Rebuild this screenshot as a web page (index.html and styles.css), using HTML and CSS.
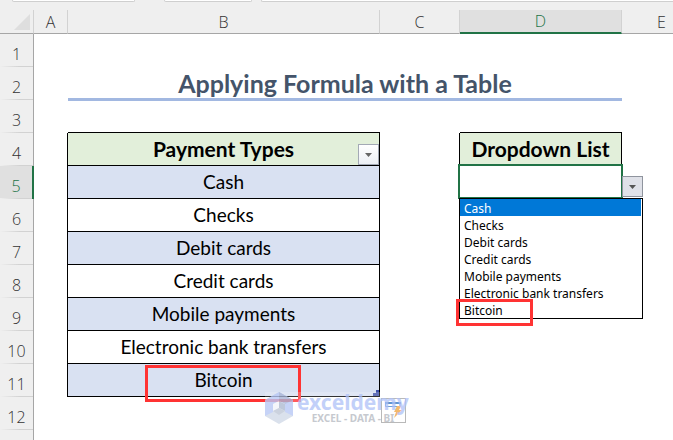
FILE: index.html
```html
<!DOCTYPE html>
<html lang="en">
<head>
    <meta charset="UTF-8">
    <meta name="viewport" content="width=device-width, initial-scale=1.0">
    <title>Applying Formula with a Table</title>
    <link rel="stylesheet" href="styles.css">
</head>
<body>
    <div class="window">
        <!-- Bottom edge of the name box and formula bar -->
        <div class="ribbon">
            <span class="box name-box"></span>
            <span class="box fx-box"></span>
            <span class="box formula-box"></span>
        </div>

        <table class="sheet">
            <colgroup>
                <col class="col-num"><col class="col-a"><col class="col-b"><col class="col-c"><col class="col-d"><col class="col-e">
            </colgroup>
            <thead>
                <tr>
                    <th class="corner"><svg width="16" height="16" viewBox="0 0 16 16"><path d="M16 0V16H0Z" fill="#dedede"/></svg></th>
                    <th>A</th>
                    <th>B</th>
                    <th>C</th>
                    <th class="active">D</th>
                    <th>E</th>
                </tr>
            </thead>
            <tbody>
                <tr><th>1</th><td></td><td></td><td></td><td></td><td></td></tr>
                <tr><th>2</th><td></td><td class="title" colspan="3">Applying Formula with a Table</td><td></td></tr>
                <tr><th>3</th><td></td><td class="line-bottom"></td><td></td><td class="line-bottom"></td><td></td></tr>
                <tr>
                    <th>4</th>
                    <td class="line-right"></td>
                    <td class="cell head">Payment Types
                        <button class="arrow filter" type="button" aria-label="Filter"><svg width="7" height="4" viewBox="0 0 7 4"><path d="M0 0H7L3.5 4Z" fill="#666"/></svg></button>
                    </td>
                    <td class="line-right"></td>
                    <td class="cell head">Dropdown List</td>
                    <td></td>
                </tr>
                <tr>
                    <th class="active">5</th>
                    <td class="line-right"></td>
                    <td class="cell band">Cash</td>
                    <td class="line-right"></td>
                    <td class="cell selected">
                        <span class="selection"></span>
                        <button class="arrow open" type="button" aria-label="Open list"><svg width="7" height="4" viewBox="0 0 7 4"><path d="M0 0H7L3.5 4Z" fill="#555"/></svg></button>
                        <select class="options" size="7" aria-label="Dropdown List">
                            <option selected>Cash</option>
                            <option>Checks</option>
                            <option>Debit cards</option>
                            <option>Credit cards</option>
                            <option>Mobile payments</option>
                            <option>Electronic bank transfers</option>
                            <option>Bitcoin</option>
                        </select>
                        <span class="mark mark-option"></span>
                    </td>
                    <td></td>
                </tr>
                <tr><th>6</th><td class="line-right"></td><td class="cell">Checks</td><td></td><td></td><td></td></tr>
                <tr><th>7</th><td class="line-right"></td><td class="cell band">Debit cards</td><td></td><td></td><td></td></tr>
                <tr><th>8</th><td class="line-right"></td><td class="cell">Credit cards</td><td></td><td></td><td></td></tr>
                <tr><th>9</th><td class="line-right"></td><td class="cell band">Mobile payments</td><td></td><td></td><td></td></tr>
                <tr><th>10</th><td class="line-right"></td><td class="cell">Electronic bank transfers</td><td></td><td></td><td></td></tr>
                <tr>
                    <th>11</th>
                    <td class="line-right"></td>
                    <td class="cell band">Bitcoin
                        <svg class="resize" width="6" height="6" viewBox="0 0 6 6"><path d="M3 0H6V6H0V3H3Z" fill="#3f51a8"/></svg>
                        <span class="mark mark-cell"></span>
                        <button class="paste" type="button" aria-label="AutoCorrect options">
                            <svg width="23" height="23" viewBox="0 0 23 23">
                                <path d="M18 4V7.5H3.5V4" fill="none" stroke="#4c86cc"/>
                                <path d="M3 4H19" stroke="#3878c4" stroke-width="2"/>
                                <path d="M15 7H19L17 11H20L12 19L14 13H12Z" fill="#f0a848"/>
                            </svg>
                        </button>
                        <div class="watermark">
                            <svg width="28" height="32" viewBox="0 0 28 32">
                                <path d="M14 0L28 8V24L14 32L0 24V8Z" fill="#d2dae8"/>
                                <path d="M14 0L28 8V24L20 20V12L14 9L8 12V20L0 24V8Z" fill="#b9c9f6"/>
                                <path d="M14 0L28 8L20 12L14 9Z" fill="#a9b5d6"/>
                                <path d="M14 9L20 12V19L14 16L8 19V12Z" fill="#f2f5fb"/>
                                <path d="M14 9L20 12V19L14 16Z" fill="#aebbd2"/>
                                <path d="M8 19L14 16L20 19L14 23Z" fill="#bfc8d6"/>
                            </svg>
                            <div class="brand">
                                <span class="brand-name">exceldemy</span>
                                <span class="brand-tag">EXCEL - DATA - BI</span>
                            </div>
                        </div>
                    </td>
                    <td></td><td></td><td></td>
                </tr>
                <tr><th>12</th><td></td><td></td><td></td><td></td><td></td></tr>
                <tr><th></th><td></td><td></td><td></td><td></td><td></td></tr>
            </tbody>
        </table>
    </div>
</body>
</html>
```

FILE: styles.css
```css
* {
    box-sizing: border-box;
}
body {
    margin: 0;
    background-color: #fff;
    font-family: Lato, Carlito, sans-serif;
}
.window {
    height: 100vh;
    overflow: hidden;
}
.ribbon {
    display: flex;
    height: 10px;
    padding-left: 12px;
    background-color: #efefef;
}
.box {
    height: 2px;
    background-color: #fff;
    border: 1px solid #cfcfcf;
    border-top: none;
    border-radius: 0 0 4px 4px;
}
.name-box {
    width: 123px;
    margin-right: 29px;
}
.fx-box {
    width: 88px;
    margin-right: 9px;
}
.formula-box {
    flex: 1;
    border-right: none;
    border-radius: 0 0 0 4px;
}

/* Sheet grid: every cell draws its own right and bottom line */
.sheet {
    width: 702px;
    table-layout: fixed;
    border-collapse: separate;
    border-spacing: 0;
}
.col-num, .col-a { width: 34px; }
.col-b { width: 312px; }
.col-c, .col-e { width: 80px; }
.col-d { width: 162px; }

.sheet th, .sheet td {
    position: relative;
    height: 33px;
    padding: 0;
    text-align: center;
}
.sheet th {
    background-color: #efefef;
    color: #333;
    font-family: "Open Sans", "Noto Sans", sans-serif;
    font-size: 16px;
    font-weight: 300;
    line-height: 22px;
}
.sheet thead th {
    height: 24px;
    border-bottom: 1px solid #a6a6a6;
    border-right: 1px solid #d2d2d2;
}
.sheet tbody th {
    padding-bottom: 2px;
    vertical-align: bottom;
    border-right: 1px solid #a6a6a6;
    background-image: linear-gradient(to right, #efefef, #d2d2d2 60%);
    background-size: 100% 1px;
    background-position: bottom;
    background-repeat: no-repeat;
}
.sheet thead .corner {
    padding: 4px 3px 0 0;
    text-align: right;
    line-height: 0;
    vertical-align: top;
}
.sheet thead .active {
    background-color: #e0e0e0;
    color: #217346;
    border-bottom: 2px solid #217346;
}
.sheet tbody .active {
    background-color: #e0e0e0;
    color: #217346;
    border-right: 2px solid #217346;
}

.sheet .title {
    border-bottom: 2px solid #a2b8e1;
    box-shadow: 0 1px #a2b8e1;
    color: #44546a;
    font-size: 25px;
    font-weight: bold;
    line-height: 30px;
}
.sheet .line-bottom {
    border-bottom: 1px solid #000;
}
.sheet .line-right {
    border-right: 1px solid #000;
}
.sheet .cell {
    border-right: 1px solid #000;
    border-bottom: 1px solid #000;
    font-size: 19px;
    line-height: 24px;
}
.sheet .head {
    background-color: #e2efda;
    font-size: 21px;
    font-weight: bold;
}
.sheet .band {
    background-color: #d9e1f2;
}

.arrow {
    position: absolute;
    display: flex;
    align-items: center;
    justify-content: center;
    width: 21px;
    height: 21px;
    padding: 0;
    border: 1px solid #a3a9b5;
    background: linear-gradient(#fff, #eceff5);
}
.filter {
    right: 0;
    bottom: 0;
}
.open {
    left: 162px;
    top: 10px;
    border-color: #8f949e;
    background: #dfe1e8;
}
.selection {
    position: absolute;
    left: -2px;
    top: -2px;
    width: 165px;
    height: 35px;
    border: 2px solid #217346;
}
.options {
    position: absolute;
    z-index: 1;
    left: -1px;
    top: 32px;
    width: 184px;
    height: 121px;
    padding: 0 1px 0 0;
    border: 1px solid #000;
    border-radius: 0;
    outline: none;
    overflow: hidden;
    background-color: #fff;
    color: #000;
    font-family: "Noto Sans", sans-serif;
    font-size: 12px;
}
.options option {
    min-height: 17px;
    height: 17px;
    padding: 1px 4px 0;
    line-height: 16px;
}
.options option:checked {
    background: linear-gradient(#0078d7, #0078d7);
    color: #fff;
}

/* Red highlight frames */
.mark {
    position: absolute;
    z-index: 2;
    border: 3px solid #ff3333;
}
.mark-option {
    left: -4px;
    top: 133px;
    width: 77px;
    height: 27px;
}
.mark-cell {
    left: 77px;
    top: 1px;
    width: 156px;
    height: 37px;
}

.resize {
    position: absolute;
    right: 0;
    bottom: 0;
}
.paste {
    position: absolute;
    left: 313px;
    top: 34px;
    width: 25px;
    height: 25px;
    padding: 0;
    border: 1px solid #a8a8a8;
    background: #fff;
    line-height: 0;
}
.watermark {
    position: absolute;
    z-index: 3;
    left: 197px;
    top: 28px;
    display: flex;
    gap: 4px;
    background-color: rgba(255, 255, 255, 0.25);
    opacity: 0.8;
}
.brand {
    display: flex;
    flex-direction: column;
    align-items: center;
    font-family: "Noto Sans", sans-serif;
    font-weight: bold;
}
.brand-name {
    color: #b4c5f8;
    font-size: 21px;
    line-height: 21px;
}
.brand-tag {
    color: #b8bcc4;
    font-size: 10px;
    line-height: 11px;
    white-space: nowrap;
}
```
